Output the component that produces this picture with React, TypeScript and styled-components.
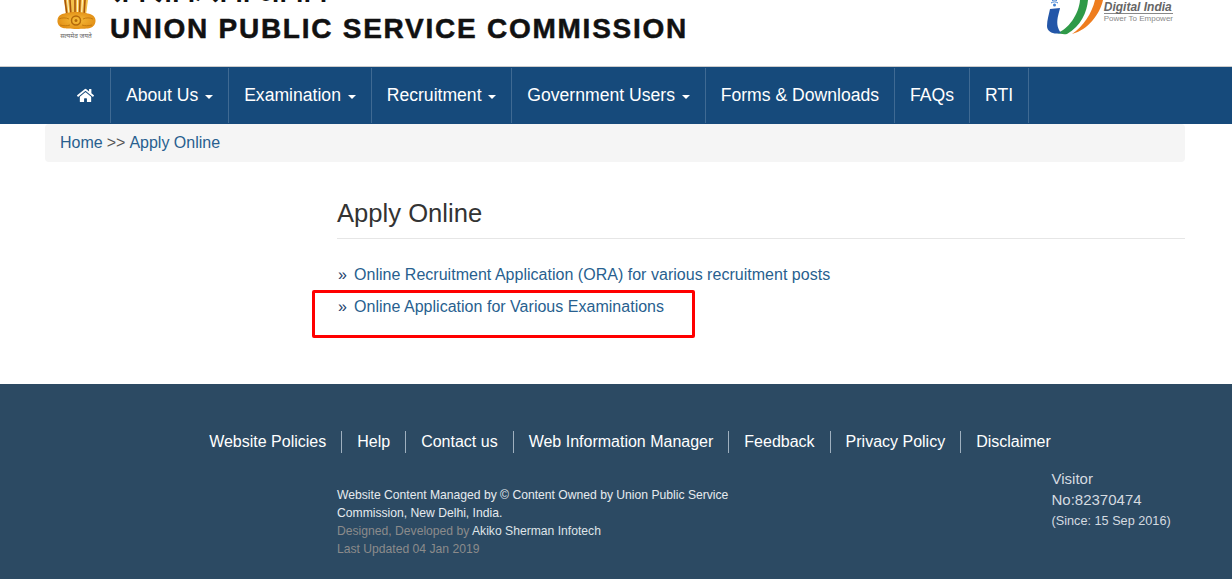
import React from "react";
import styled, { createGlobalStyle } from "styled-components";
import { FaHome } from "react-icons/fa";

const navItems = [
  { label: "About Us", caret: true },
  { label: "Examination", caret: true },
  { label: "Recruitment", caret: true },
  { label: "Government Users", caret: true },
  { label: "Forms & Downloads", caret: false },
  { label: "FAQs", caret: false },
  { label: "RTI", caret: false },
];

const footerLinks = [
  "Website Policies",
  "Help",
  "Contact us",
  "Web Information Manager",
  "Feedback",
  "Privacy Policy",
  "Disclaimer",
];

const Emblem = () => (
  <svg width="41" height="42" viewBox="0 0 41 42">
    <defs>
      <radialGradient id="lion" cx="50%" cy="50%" r="60%">
        <stop offset="0%" stopColor="#f7bd3a" />
        <stop offset="100%" stopColor="#e08a12" />
      </radialGradient>
    </defs>
    <path d="M9 0h24l-2 15H11z" fill="#f3c04a" />
    <path d="M10 0l2 15M15 0l1 15M20 0v15M25 0l-.5 15M30 0l-1 15" stroke="#a8560c" strokeWidth="1.6" />
    <path d="M12.500 0l1.500 14M22.500 0v14M27.500 0l-1 14" stroke="#fff3c8" strokeWidth="1" />
    <path d="M11 13c5-1.500 15-1.500 20 0 4 1 9 2 9.500 7 .3 4-2 7-5.500 8-4 1.200-23 1.200-27 0-3.500-1-6-4-5.500-8 .5-5 4.500-6 8.500-7z" fill="url(#lion)" />
    <circle cx="21" cy="20.500" r="4.500" fill="none" stroke="#b4690a" strokeWidth="1.500" />
    <circle cx="21" cy="20.500" r="1.500" fill="#b4690a" />
    <path d="M4 19c3-1.500 7-1.500 10 0M28 19c3-1.500 7-1.500 10 0M5 25c4 1 7 1 10 0M27 25c3 1 6 1 10 0" fill="none" stroke="#c47a0e" strokeWidth="1" />
    <text x="21" y="38" textAnchor="middle" fontSize="6.500" fill="#666" fontFamily="'Noto Sans', 'Liberation Sans', sans-serif">सत्यमेव जयते</text>
  </svg>
);

const DigitalIndiaMark = () => (
  <svg width="58" height="36" viewBox="0 0 58 36">
    <path d="M49 0h8C54 14 42 30 26 34 37 27 46 13 49 0z" fill="#ee7d1f" />
    <path d="M34 0h8c-1 12-7 26-21 34-3 .5-7 0-10-1C22 30 33 14 34 0z" fill="#2f9a48" />
    <path d="M4 9l10-1c-1 6-6 16 1 25-7 2-14-1-14-7 0-6 2-12 3-17z" fill="#2356a8" />
    <circle cx="8.500" cy="5" r="1.500" fill="#3f7fd0" />
    <path d="M5 3c2-1.500 5-1.500 7 0M6 0.500c1.500-.5 3.500-.5 5 0" fill="none" stroke="#3f7fd0" strokeWidth="1" />
  </svg>
);

export default function App() {
  return (
    <>
      <GlobalStyle />
      <Header>
        <Brand>
          <Emblem />
          <BrandText>
            <HindiTitle>संघ लोक सेवा आयोग</HindiTitle>
            <Title>UNION PUBLIC SERVICE COMMISSION</Title>
          </BrandText>
        </Brand>
        <DigitalIndia>
          <DigitalIndiaMark />
          <DigitalText>
            <DigitalName>Digital India</DigitalName>
            <DigitalTag>Power To Empower</DigitalTag>
          </DigitalText>
        </DigitalIndia>
      </Header>

      <Nav>
        <NavItem $home>
          <FaHome size={17} />
        </NavItem>
        {navItems.map((item) => (
          <NavItem key={item.label}>
            {item.label}
            {item.caret && <Caret />}
          </NavItem>
        ))}
      </Nav>

      <Breadcrumb>
        <BreadLink>Home</BreadLink>
        <BreadSep>&gt;&gt;</BreadSep>
        <BreadLink>Apply Online</BreadLink>
      </Breadcrumb>

      <Main>
        <Heading>Apply Online</Heading>
        <LinkList>
          <LinkRow>
            <Bullet>»</Bullet>
            <ContentLink>Online Recruitment Application (ORA) for various recruitment posts</ContentLink>
          </LinkRow>
          <LinkRow>
            <Bullet>»</Bullet>
            <ContentLink>Online Application for Various Examinations</ContentLink>
            <Highlight />
          </LinkRow>
        </LinkList>
      </Main>

      <Footer>
        <FooterNav>
          {footerLinks.map((link) => (
            <FooterLink key={link}>{link}</FooterLink>
          ))}
        </FooterNav>
        <FooterBottom>
          <Credits>
            <div>Website Content Managed by © Content Owned by Union Public Service Commission, New Delhi, India.</div>
            <Muted>
              Designed, Developed by <CreditName>Akiko Sherman Infotech</CreditName>
            </Muted>
            <Muted>Last Updated 04 Jan 2019</Muted>
          </Credits>
          <Visitor>
            <VisitorCount>Visitor No:82370474</VisitorCount>
            <VisitorSince>(Since: 15 Sep 2016)</VisitorSince>
          </Visitor>
        </FooterBottom>
      </Footer>
    </>
  );
}

const GlobalStyle = createGlobalStyle`
  html, body {
    margin: 0;
    padding: 0;
    background: #fff;
    overflow: hidden;
  }
  body {
    font-family: "Liberation Sans", Arial, sans-serif;
    font-size: 16px;
    color: #333;
  }
`;

const Header = styled.header`
  height: 66px;
  overflow: hidden;
  display: flex;
  justify-content: space-between;
  align-items: flex-start;
  padding: 0 59px 0 55px;
  box-sizing: border-box;
`;

const Brand = styled.div`
  display: flex;
  align-items: flex-start;
`;

const BrandText = styled.div`
  margin-left: 14px;
  margin-top: -19px;
`;

const HindiTitle = styled.div`
  font-family: "Noto Sans", "Liberation Sans", sans-serif;
  font-size: 26px;
  font-weight: 700;
  line-height: 22px;
  margin-bottom: 9px;
  color: #111;
`;

const Title = styled.h1`
  margin: 0;
  font-size: 28px;
  line-height: 34px;
  font-weight: 700;
  letter-spacing: 1.75px;
  color: #111;
  white-space: nowrap;
  -webkit-text-stroke: 0.5px #111;
`;

const DigitalIndia = styled.div`
  display: flex;
  align-items: flex-start;
`;

const DigitalText = styled.div`
  margin-top: 1px;
`;

const DigitalName = styled.div`
  font-size: 12px;
  line-height: 12px;
  font-weight: 700;
  font-style: italic;
  color: #666;
  border-bottom: 1px solid #888;
  white-space: nowrap;
`;

const DigitalTag = styled.div`
  font-size: 8px;
  line-height: 9px;
  color: #888;
  white-space: nowrap;
`;

const Nav = styled.nav`
  height: 58px;
  background: #164a7b;
  border-top: 1px solid #ccc;
  box-sizing: border-box;
  display: flex;
  align-items: stretch;
  padding: 1px 0 0 61px;
`;

const NavItem = styled.div<{ $home?: boolean }>`
  display: flex;
  align-items: center;
  padding: 0 15px;
  width: ${(p) => (p.$home ? "19px" : "auto")};
  justify-content: center;
  margin-bottom: 1px;
  color: #fff;
  font-size: 17.6px;
  white-space: nowrap;
  border-right: 1px solid #3f6a93;
`;

const Caret = styled.span`
  width: 0;
  height: 0;
  margin-left: 6.75px;
  margin-top: 2px;
  border-top: 4px solid #fff;
  border-left: 4px solid transparent;
  border-right: 4px solid transparent;
`;

const Breadcrumb = styled.div`
  margin: 0 47px 0 45px;
  height: 38px;
  display: flex;
  align-items: center;
  padding: 0 15px;
  background: #f5f5f5;
  border-radius: 4px;
  font-size: 16px;
`;

const BreadLink = styled.span`
  color: #285f8f;
`;

const BreadSep = styled.span`
  color: #555;
  margin: 0 4px;
`;

const Main = styled.main`
  margin: 0 47px 0 337px;
  height: 222px;
  padding-top: 36px;
  box-sizing: border-box;
`;

const Heading = styled.h2`
  margin: 0;
  padding-bottom: 10px;
  font-size: 25.6px;
  line-height: 30px;
  font-weight: 400;
  color: #333;
  border-bottom: 1px solid #e6e6e6;
`;

const LinkList = styled.div`
  margin-top: 20px;
`;

const LinkRow = styled.div`
  position: relative;
  height: 32px;
  display: flex;
  align-items: center;
  font-size: 16px;
`;

const Bullet = styled.span`
  width: 17px;
  padding-left: 1px;
  box-sizing: border-box;
  color: #23406c;
`;

const ContentLink = styled.span`
  color: #285f8f;
  letter-spacing: 0.02px;
`;

const Highlight = styled.div`
  position: absolute;
  left: -25px;
  top: -1px;
  width: 377px;
  height: 42px;
  border: 3px solid #f00;
  border-radius: 2px;
`;

const Footer = styled.footer`
  height: 195px;
  background: #2c4a63;
  overflow: hidden;
`;

const FooterNav = styled.div`
  display: flex;
  justify-content: center;
  padding: 47px 0 0 28px;
`;

const FooterLink = styled.span`
  padding: 0 15px;
  line-height: 22px;
  font-size: 16px;
  color: #fff;
  white-space: nowrap;
  border-right: 1px solid #9fb0bf;
  &:last-child {
    border-right: none;
  }
`;

const FooterBottom = styled.div`
  display: flex;
  align-items: flex-start;
  margin-top: 15px;
  padding-left: 337px;
`;

const Credits = styled.div`
  width: 420px;
  padding-top: 18px;
  font-size: 12.15px;
  line-height: 18px;
  color: #e6ebef;
`;

const Muted = styled.div`
  color: #8b8b8b;
`;

const CreditName = styled.span`
  color: #dfe4e8;
`;

const Visitor = styled.div`
  margin-left: 294.5px;
  width: 130px;
  color: #d5dbe0;
`;

const VisitorCount = styled.div`
  width: 110px;
  font-size: 15px;
  line-height: 21px;
`;

const VisitorSince = styled.div`
  margin-top: 2px;
  font-size: 12.7px;
  line-height: 18px;
  white-space: nowrap;
`;
